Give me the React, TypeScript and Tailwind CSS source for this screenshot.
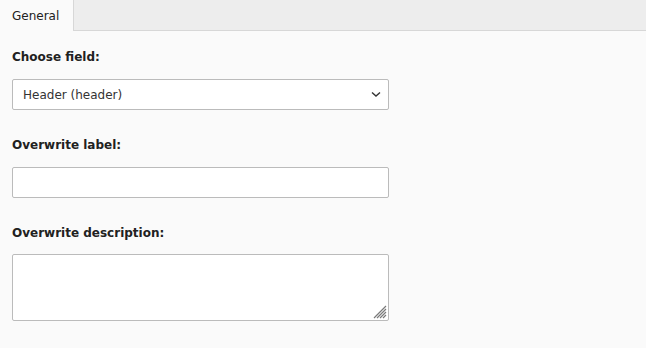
import React from 'react';

const font = { fontFamily: '"DejaVu Sans", Verdana, sans-serif' };

export default function App() {
  return (
    <div className="min-h-screen w-full bg-[#fafafa] text-[12px] text-[#212121]" style={font}>
      {/* tab bar */}
      <div className="flex h-[31px] border-b border-[#d7d7d7] bg-[#ededed]">
        <div className="-mb-px flex w-[74px] items-center border-r border-[#d7d7d7] bg-[#fafafa] pl-3">
          General
        </div>
      </div>

      <div className="w-[389px] pl-3 pt-[17px]">
        <div className="mb-[26px]">
          <label className="mb-[13px] block font-bold leading-[18px]">Choose field:</label>
          <div className="relative">
            <select
              className="h-[31px] w-full appearance-none rounded-[2px] border border-[#bbbbbb] bg-white pl-[10px] text-[12px] text-[#333] outline-none"
              style={font}
              defaultValue="header"
            >
              <option value="header">Header (header)</option>
            </select>
            <svg
              className="pointer-events-none absolute right-[8px] top-[12px]"
              width="10"
              height="7"
              viewBox="0 0 10 7"
              fill="none"
            >
              <path d="M1 1.5 L5 5 L9 1.5" stroke="#333" strokeWidth="1.4" />
            </svg>
          </div>
        </div>

        <div className="mb-[26px]">
          <label className="mb-[13px] block font-bold leading-[18px]">Overwrite label:</label>
          <input
            type="text"
            className="block h-[31px] w-full rounded-[2px] border border-[#bbbbbb] bg-white px-[10px] outline-none"
          />
        </div>

        <div>
          <label className="mb-[12px] block font-bold leading-[18px]">Overwrite description:</label>
          <div className="relative">
            <textarea className="block h-[67px] w-full resize-none rounded-[2px] border border-[#bbbbbb] bg-white px-[10px] outline-none" />
            {/* resize grip */}
            <svg
              className="pointer-events-none absolute bottom-[2px] right-[2px]"
              width="14"
              height="14"
              viewBox="0 0 14 14"
              fill="none"
              stroke="#7a7a7a"
              strokeWidth="1.2"
            >
              <path d="M13 1 L1 13 M13 4 L4 13 M13 7 L7 13 M13 10 L10 13" />
            </svg>
          </div>
        </div>
      </div>
    </div>
  );
}
